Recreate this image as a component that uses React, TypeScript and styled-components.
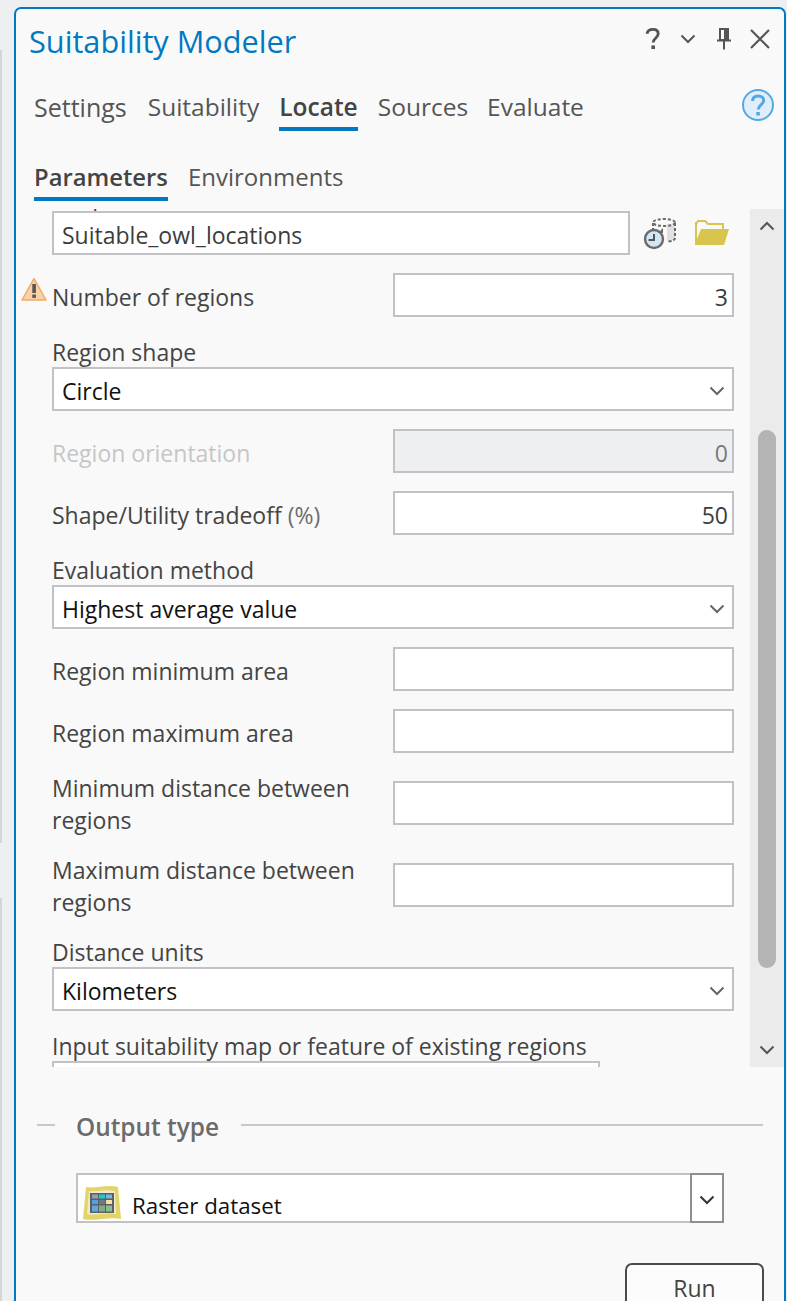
import styled, { createGlobalStyle } from 'styled-components'

const GlobalStyle = createGlobalStyle`
  html, body {
    margin: 0;
    padding: 0;
    height: 1301px;
    overflow: hidden;
    background: #eeeff1;
  }
  * {
    box-sizing: border-box;
  }
`

const font = `'Open Sans', 'Noto Sans', 'Liberation Sans', sans-serif`

const Page = styled.div`
  display: flex;
  width: 787px;
  height: 1301px;
  font-family: ${font};
  color: #444;
`

const Rail = styled.div`
  width: 14px;
  padding-top: 50px;
  display: flex;
  flex-direction: column;
  gap: 55px;
  flex-shrink: 0;
`

const RailPiece = styled.div<{ $h: number }>`
  width: 2px;
  height: ${p => p.$h}px;
  background: #d6d6d6;
`

const Panel = styled.div`
  margin-top: 7px;
  width: 772px;
  height: 1294px;
  background: #f9f9f9;
  border: 2px solid #0079c1;
  border-bottom: none;
  border-radius: 7px 7px 0 0;
  overflow: hidden;
  flex-shrink: 0;
`

const TitleBar = styled.div`
  height: 83px;
  padding: 9px 6px 0 13px;
  display: flex;
  align-items: flex-start;
  justify-content: space-between;
`

const Title = styled.div`
  font-size: 30.7px;
  line-height: 46px;
  color: #0079c1;
`

const WindowIcons = styled.div`
  display: flex;
  align-items: center;
  height: 42px;
`

const IconSlot = styled.div<{ $w: number }>`
  width: ${p => p.$w}px;
  display: flex;
  justify-content: center;
`

const TabRow = styled.div<{ $height: number }>`
  height: ${p => p.$height}px;
  padding-left: 18px;
  display: flex;
  align-items: flex-start;
  position: relative;
`

const Tab = styled.div<{ $active?: boolean; $gap: number; $size?: number }>`
  font-size: ${p => p.$size || 24.5}px;
  line-height: 32px;
  margin-top: -1px;
  margin-right: ${p => p.$gap}px;
  padding-bottom: ${p => (p.$active ? 4 : 0)}px;
  font-weight: ${p => (p.$active ? 600 : 400)};
  color: ${p => (p.$active ? '#444' : '#555')};
  border-bottom: ${p => (p.$active ? '4px' : '0')} solid #0079c1;
  white-space: nowrap;
`

const HelpButton = styled.div`
  position: absolute;
  right: 9px;
  top: -4px;
`

const Body = styled.div`
  height: 858px;
  display: flex;
  overflow: hidden;
`

const Form = styled.div`
  width: 734px;
  padding-left: 36px;
  padding-right: 16px;
  overflow: hidden;
  position: relative;
`

const FormInner = styled.div`
  margin-top: -24px;
  display: flex;
  flex-direction: column;
`

const Label = styled.div<{ $disabled?: boolean; $multi?: boolean }>`
  font-size: 23px;
  line-height: 32px;
  padding-top: ${p => (p.$multi ? 2 : 4)}px;
  color: ${p => (p.$disabled ? '#c6c6c6' : '#444')};
`

const Muted = styled.span`
  color: #6d6d6d;
`

const StackLabel = styled.div`
  height: 28px;
  font-size: 23px;
  line-height: 26px;
  color: #444;
  white-space: nowrap;
`

const CutLabel = styled(StackLabel)`
  height: 26px;
  line-height: 28px;
`

const Field = styled.div<{ $disabled?: boolean; $align?: string }>`
  height: 44px;
  border: 2px solid #c2c2c6;
  background: ${p => (p.$disabled ? '#eeeff1' : '#fff')};
  color: ${p => (p.$disabled ? '#7a7a7a' : '#3c3c3c')};
  font-size: 23px;
  line-height: 36px;
  padding: 4px 4px 0 8px;
  display: flex;
  align-items: center;
  justify-content: ${p => (p.$align === 'right' ? 'flex-end' : 'space-between')};
  white-space: nowrap;
`

const SelectField = styled(Field)`
  color: #111;
  padding-right: 7px;
`

const Row = styled.div<{ $top: number }>`
  display: grid;
  grid-template-columns: 341px 341px;
  align-items: center;
  margin-top: ${p => p.$top}px;
  position: relative;
`

const Stack = styled.div<{ $top: number }>`
  margin-top: ${p => p.$top}px;
`

const OutputRow = styled.div`
  display: flex;
  align-items: center;
  gap: 13px;
`

const OutputField = styled(Field)`
  width: 578px;
  flex-shrink: 0;
`

const OutputIcons = styled.div`
  display: flex;
  align-items: center;
  gap: 18px;
`

const WarnIcon = styled.div`
  position: absolute;
  left: -31px;
  top: 4px;
`

const ClippedField = styled(Field)`
  width: 548px;
`

const Track = styled.div`
  width: 34px;
  height: 858px;
  background: #ebebeb;
  display: flex;
  flex-direction: column;
  align-items: center;
  flex-shrink: 0;
`

const TrackCap = styled.div`
  height: 34px;
  padding-top: 12px;
  display: flex;
  justify-content: center;
`

const Thumb = styled.div`
  width: 18px;
  height: 538px;
  margin-top: 187px;
  margin-bottom: 65px;
  background: #b4b4b4;
  border-radius: 9px;
`

const Section = styled.div`
  margin-top: 42px;
  padding: 0 21px;
  display: flex;
  align-items: center;
  height: 36px;
`

const SectionLine = styled.div<{ $grow?: boolean }>`
  height: 2px;
  background: #c8c8c8;
  width: 18px;
  flex-grow: ${p => (p.$grow ? 1 : 0)};
  margin-top: -4px;
`

const SectionTitle = styled.div`
  font-size: 24.4px;
  line-height: 36px;
  font-weight: 600;
  color: #6b6b6b;
  padding: 0 22px 0 21px;
`

const TypeSelect = styled.div`
  margin: 28px 0 0 60px;
  width: 648px;
  height: 50px;
  border: 2px solid #c2c2c6;
  background: #fff;
  display: flex;
  align-items: stretch;
  color: #111;
  font-size: 22.3px;
`

const TypeValue = styled.div`
  flex-grow: 1;
  display: flex;
  align-items: center;
  padding: 10px 0 0 4px;
  gap: 10px;
`

const TypeText = styled.span`
  padding-top: 4px;
`

const TypeButton = styled.div`
  width: 34px;
  margin: -2px -2px -2px 0;
  border: 2px solid #8e8e94;
  display: flex;
  align-items: center;
  justify-content: center;
  padding-top: 4px;
`

const Footer = styled.div`
  margin-top: 40px;
  display: flex;
  justify-content: flex-end;
  padding-right: 20px;
`

const RunButton = styled.div`
  width: 139px;
  height: 60px;
  border: 2px solid #4a4a4a;
  border-radius: 7px;
  background: #fcfcfc;
  text-align: center;
  font-size: 23px;
  line-height: 46px;
  color: #444;
`

function Chevron ({ color = '#555', up = false }: { color?: string; up?: boolean }) {
  return (
    <svg width={16} height={10} viewBox='0 0 16 10' style={{ display: 'block' }}>
      <path
        d={up ? 'M1.5 8.5 8 2l6.5 6.5' : 'M1.5 1.5 8 8l6.5-6.5'}
        fill='none'
        stroke={color}
        strokeWidth={2}
      />
    </svg>
  )
}

function HelpQuestion () {
  return (
    <svg width={18} height={24} viewBox='0 0 22 30' style={{ display: 'block' }}>
      <path
        d='M3.500 8.500C4 4.500 7.500 3 11 3c4 0 6.500 2.200 6.500 5.500 0 5-6.200 5.500-6.200 11'
        fill='none'
        stroke='#555'
        strokeWidth={3.6}
      />
      <rect x={9} y={23} width={4.500} height={4.500} fill='#555' />
    </svg>
  )
}

function PinIcon () {
  return (
    <svg width={16} height={22} viewBox='0 0 16 22' style={{ display: 'block' }}>
      <path d='M4 1h8v11H4z' fill='none' stroke='#555' strokeWidth={2} />
      <path d='M8 1h4v11H8z' fill='#555' />
      <path d='M1 12.500h14M8 13v8.500' stroke='#555' strokeWidth={2} />
    </svg>
  )
}

function CloseIcon () {
  return (
    <svg width={22} height={22} viewBox='0 0 22 22' style={{ display: 'block' }}>
      <path d='M2 2l18 18M20 2 2 20' stroke='#555' strokeWidth={2.2} />
    </svg>
  )
}

function HelpCircle () {
  return (
    <svg width={34} height={34} viewBox='0 0 34 34' style={{ display: 'block' }}>
      <circle cx={17} cy={17} r={15} fill='#deeefb' stroke='#56a9e0' strokeWidth={2} />
      <path
        d='M11.500 13c.3-3.500 2.700-5 5.700-5 3.300 0 5.500 1.900 5.500 4.500 0 4-5.400 4.400-5.400 9'
        fill='none'
        stroke='#56a9e0'
        strokeWidth={3}
      />
      <rect x={15.300} y={24} width={3.500} height={3.500} fill='#56a9e0' />
    </svg>
  )
}

function HistoryDbIcon () {
  return (
    <svg width={34} height={34} viewBox='0 0 34 34' style={{ display: 'block' }}>
      <path d='M24 8h8v14l-4 3h-4z' fill='#e0e0e0' />
      <ellipse cx={21} cy={6.500} rx={11} ry={3.500} fill='none' stroke='#6a6a6a' strokeWidth={2} strokeDasharray='3 2' />
      <path
        d='M10 7v8M32 7v15c0 2-3 3.500-7 3.500'
        fill='none'
        stroke='#6a6a6a'
        strokeWidth={2}
        strokeDasharray='3 2'
      />
      <circle cx={11} cy={23} r={9} fill='#cfe6f7' stroke='#6a6a6a' strokeWidth={2.4} />
      <path d='M11 18v6H5.500' fill='none' stroke='#555' strokeWidth={2} />
      <path d='M15 17l5 0 0-5z' fill='#6a6a6a' />
    </svg>
  )
}

function FolderIcon () {
  return (
    <svg width={34} height={26} viewBox='0 0 34 26' style={{ display: 'block' }}>
      <path d='M1 24V4l2-3h7l3 3h15v5' fill='none' stroke='#d9c44e' strokeWidth={2} />
      <path d='M6 9h28l-5 16H0V24z' fill='#d9c44e' />
      <path d='M0 2h2v22H0z' fill='#d9c44e' />
    </svg>
  )
}

function WarningIcon () {
  return (
    <svg width={26} height={24} viewBox='0 0 26 24' style={{ display: 'block' }}>
      <path d='M13 1.500 25 23H1z' fill='#fbd2a6' stroke='#eeaa68' strokeWidth={1.500} strokeLinejoin='round' />
      <rect x={11.300} y={7} width={3.600} height={9} fill='#555' />
      <rect x={11.300} y={17.500} width={3.600} height={3.400} fill='#555' />
    </svg>
  )
}

function RasterIcon () {
  const cells: [number, number, string][] = [
    [0, 0, '#8fa3ad'], [1, 0, '#21c7d9'], [2, 0, '#7fb4d6'],
    [0, 1, '#4fa3e0'], [1, 1, '#6d7a82'], [2, 1, '#f1e3a8'],
    [0, 2, '#62a8dc'], [1, 2, '#7fae84'], [2, 2, '#8fbc8f']
  ]
  return (
    <svg width={40} height={36} viewBox='0 0 40 36' style={{ display: 'block' }}>
      <path d='M4 2c10 2 20-3 32 0l3 32c-12-3-26 3-38 0z' fill='#e3d467' />
      <path d='M7 6c8 1 17-2 26 0l1 23c-10-2-20 2-29 0z' fill='#efeacb' />
      <rect x={8} y={8} width={24} height={20} fill='#5b6065' />
      {cells.map(([cx, cy, c]) => (
        <rect key={`${cx}${cy}`} x={10 + cx * 7} y={9.500 + cy * 5.500} width={6} height={cy === 2 ? 6 : 4} fill={c} />
      ))}
    </svg>
  )
}

function NumberRow ({ top, label, value, disabled, warn, multi }: { top: number; label: React.ReactNode; value?: string; disabled?: boolean; warn?: boolean; multi?: boolean }) {
  return (
    <Row $top={top}>
      {warn ? <WarnIcon><WarningIcon /></WarnIcon> : null}
      <Label $disabled={disabled} $multi={multi}>{label}</Label>
      <Field $align='right' $disabled={disabled}>{value}</Field>
    </Row>
  )
}

function SelectRow ({ top, label, value }: { top: number; label: string; value: string }) {
  return (
    <Stack $top={top}>
      <StackLabel>{label}</StackLabel>
      <SelectField>
        <span>{value}</span>
        <Chevron color='#666' />
      </SelectField>
    </Stack>
  )
}

export default function App () {
  return (
    <Page>
      <GlobalStyle />
      <Rail>
        <RailPiece $h={793} />
        <RailPiece $h={403} />
      </Rail>
      <Panel>
        <TitleBar>
          <Title>Suitability Modeler</Title>
          <WindowIcons>
            <IconSlot $w={34}><HelpQuestion /></IconSlot>
            <IconSlot $w={36}><Chevron /></IconSlot>
            <IconSlot $w={36}><PinIcon /></IconSlot>
            <IconSlot $w={36}><CloseIcon /></IconSlot>
          </WindowIcons>
        </TitleBar>
        <TabRow $height={70}>
          <Tab $gap={21} $size={25}>Settings</Tab>
          <Tab $gap={20}>Suitability</Tab>
          <Tab $gap={20} $active>Locate</Tab>
          <Tab $gap={19}>Sources</Tab>
          <Tab $gap={20}>Evaluate</Tab>
          <HelpButton><HelpCircle /></HelpButton>
        </TabRow>
        <TabRow $height={47}>
          <Tab $gap={20} $size={23.8} $active>Parameters</Tab>
          <Tab $gap={0} $size={24}>Environments</Tab>
        </TabRow>
        <Body>
          <Form>
            <FormInner>
              <CutLabel>Output raster</CutLabel>
              <OutputRow>
                <OutputField>Suitable_owl_locations</OutputField>
                <OutputIcons>
                  <HistoryDbIcon />
                  <FolderIcon />
                </OutputIcons>
              </OutputRow>
              <NumberRow top={18} label='Number of regions' value='3' warn />
              <SelectRow top={22} label='Region shape' value='Circle' />
              <NumberRow top={18} label='Region orientation' value='0' disabled />
              <NumberRow top={18} label={<>Shape/Utility tradeoff <Muted>(%)</Muted></>} value='50' />
              <SelectRow top={22} label='Evaluation method' value='Highest average value' />
              <NumberRow top={18} label='Region minimum area' />
              <NumberRow top={18} label='Region maximum area' />
              <NumberRow top={17} label='Minimum distance between regions' multi />
              <NumberRow top={16} label='Maximum distance between regions' multi />
              <SelectRow top={21} label='Distance units' value='Kilometers' />
              <Stack $top={22}>
                <StackLabel>Input suitability map or feature of existing regions</StackLabel>
                <ClippedField />
              </Stack>
            </FormInner>
          </Form>
          <Track>
            <TrackCap><Chevron up /></TrackCap>
            <Thumb />
            <TrackCap><Chevron /></TrackCap>
          </Track>
        </Body>
        <Section>
          <SectionLine />
          <SectionTitle>Output type</SectionTitle>
          <SectionLine $grow />
        </Section>
        <TypeSelect>
          <TypeValue>
            <RasterIcon />
            <TypeText>Raster dataset</TypeText>
          </TypeValue>
          <TypeButton><Chevron color='#333' /></TypeButton>
        </TypeSelect>
        <Footer>
          <RunButton>Run</RunButton>
        </Footer>
      </Panel>
    </Page>
  )
}
